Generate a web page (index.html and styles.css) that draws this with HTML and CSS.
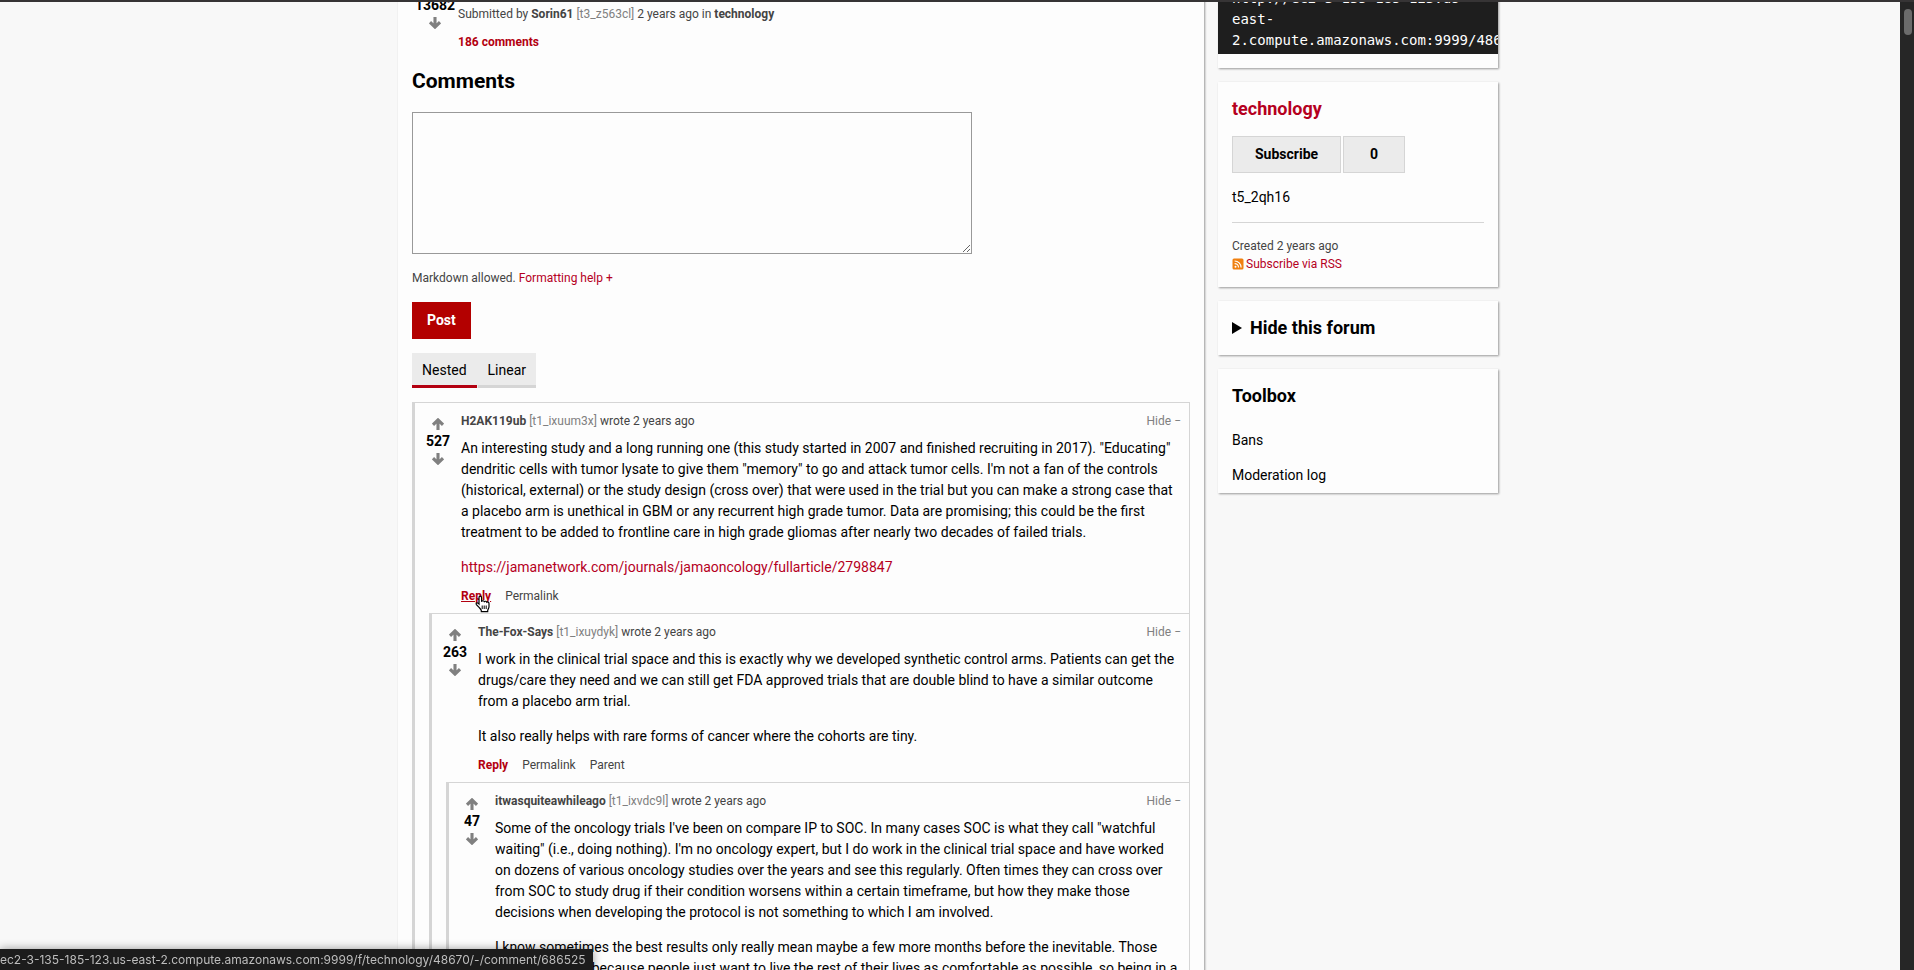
FILE: index.html
```html
<!DOCTYPE html>
<html lang="en">
<head>
<meta charset="utf-8">
<title>technology</title>
<link rel="stylesheet" href="styles.css">
</head>
<body>
<svg class="defs" aria-hidden="true">
  <symbol id="arrow-up" viewBox="0 0 12 12"><path d="M6 2V12M1 6.800 6 1.900l5 4.900" fill="none" stroke="currentColor" stroke-width="3.100"/></symbol>
  <symbol id="arrow-down" viewBox="0 0 12 12"><path d="M6 0v10M1 5.200 6 10.100l5-4.900" fill="none" stroke="currentColor" stroke-width="3.100"/></symbol>
</svg>
<div class="window">
  <div class="viewport">
    <div class="page">
      <main class="main">
        <article class="submission">
          <div class="vote">
            <span class="vote-score">13682</span>
            <button class="vote-button" aria-label="Downvote"><svg><use href="#arrow-down"/></svg></button>
          </div>
          <div class="submission-info">
            <p class="meta">Submitted by <a class="strong" href="#">Sorin61</a> <span class="muted">[t3_z563cl]</span> 2 years ago in <a class="strong" href="#">technology</a></p>
            <p class="meta"><a class="accent strong" href="#">186 comments</a></p>
          </div>
        </article>

        <h2 class="heading">Comments</h2>
        <form class="comment-form">
          <textarea class="textbox" aria-label="Comment"></textarea>
          <p class="meta">Markdown allowed. <a class="accent" href="#">Formatting help +</a></p>
          <button class="button-primary" type="button">Post</button>
        </form>

        <nav class="tabs">
          <a class="tab tab-active" href="#">Nested</a>
          <a class="tab" href="#">Linear</a>
        </nav>

        <article class="comment">
          <div class="comment-row">
            <div class="vote">
              <button class="vote-button" aria-label="Upvote"><svg><use href="#arrow-up"/></svg></button>
              <span class="vote-score">527</span>
              <button class="vote-button" aria-label="Downvote"><svg><use href="#arrow-down"/></svg></button>
            </div>
            <div class="comment-main">
              <header class="comment-header meta">
                <span><a class="strong" href="#">H2AK119ub</a> <span class="muted">[t1_ixuum3x]</span> wrote 2 years ago</span>
                <button class="hide">Hide −</button>
              </header>
              <div class="comment-body">
                <p>An interesting study and a long running one (this study started in 2007 and finished recruiting in 2017). "Educating" dendritic cells with tumor lysate to give them "memory" to go and attack tumor cells. I'm not a fan of the controls (historical, external) or the study design (cross over) that were used in the trial but you can make a strong case that a placebo arm is unethical in GBM or any recurrent high grade tumor. Data are promising; this could be the first treatment to be added to frontline care in high grade gliomas after nearly two decades of failed trials.</p>
                <p><a class="accent" href="#">https://jamanetwork.com/journals/jamaoncology/fullarticle/2798847</a></p>
              </div>
              <footer class="comment-footer meta">
                <a class="accent strong hovered" href="#">Reply<svg class="pointer" viewBox="0 0 16 18"><path d="M5 1.200c1 0 1.600.7 1.600 1.600v4l.2-.6c.3-.7 2.200-.6 2.500.4.500-.6 2.200-.5 2.500.6.600-.5 2.200-.2 2.200 1.400v3.200c0 1.600-1.300 2.400-1.300 3.800v1H6.300v-1c0-1-1.200-1.800-2-3L1.400 9.600c-.8-1.300.5-2.300 1.700-1.400l.9.900V2.800c0-.9.300-1.600 1-1.600z" fill="#fff" stroke="#000" stroke-width="1.200"/><path d="M7.200 10.500v3.500M9.200 10.500v3.500M11.200 10.500v3.500" stroke="#000" fill="none"/></svg></a>
                <a href="#">Permalink</a>
              </footer>
            </div>
          </div>

          <article class="comment comment-nested">
            <div class="comment-row">
              <div class="vote">
                <button class="vote-button" aria-label="Upvote"><svg><use href="#arrow-up"/></svg></button>
                <span class="vote-score">263</span>
                <button class="vote-button" aria-label="Downvote"><svg><use href="#arrow-down"/></svg></button>
              </div>
              <div class="comment-main">
                <header class="comment-header meta">
                  <span><a class="strong" href="#">The-Fox-Says</a> <span class="muted">[t1_ixuydyk]</span> wrote 2 years ago</span>
                  <button class="hide">Hide −</button>
                </header>
                <div class="comment-body">
                  <p>I work in the clinical trial space and this is exactly why we developed synthetic control arms. Patients can get the drugs/care they need and we can still get FDA approved trials that are double blind to have a similar outcome from a placebo arm trial.</p>
                  <p>It also really helps with rare forms of cancer where the cohorts are tiny.</p>
                </div>
                <footer class="comment-footer meta">
                  <a class="accent strong" href="#">Reply</a>
                  <a href="#">Permalink</a>
                  <a href="#">Parent</a>
                </footer>
              </div>
            </div>

            <article class="comment comment-nested">
              <div class="comment-row">
                <div class="vote">
                  <button class="vote-button" aria-label="Upvote"><svg><use href="#arrow-up"/></svg></button>
                  <span class="vote-score">47</span>
                  <button class="vote-button" aria-label="Downvote"><svg><use href="#arrow-down"/></svg></button>
                </div>
                <div class="comment-main">
                  <header class="comment-header meta">
                    <span><a class="strong" href="#">itwasquiteawhileago</a> <span class="muted">[t1_ixvdc9l]</span> wrote 2 years ago</span>
                    <button class="hide">Hide −</button>
                  </header>
                  <div class="comment-body">
                    <p>Some of the oncology trials I've been on compare IP to SOC. In many cases SOC is what they call "watchful waiting" (i.e., doing nothing). I'm no oncology expert, but I do work in the clinical trial space and have worked on dozens of various oncology studies over the years and see this regularly. Often times they can cross over from SOC to study drug if their condition worsens within a certain timeframe, but how they make those decisions when developing the protocol is not something to which I am involved.</p>
                    <p>I know sometimes the best results only really mean maybe a few more months before the inevitable. Those trials are tough because people just want to live the rest of their lives as comfortable as possible, so being in a</p>
                  </div>
                </div>
              </div>
            </article>
          </article>
        </article>
      </main>

      <aside class="sidebar">
        <section class="card">
          <pre class="code">http://ec2-3-135-185-123.us-
east-
2.compute.amazonaws.com:9999/48670</pre>
        </section>

        <section class="card">
          <h3 class="card-title"><a class="accent" href="#">technology</a></h3>
          <div class="subscribe">
            <button class="button">Subscribe</button>
            <button class="button button-count">0</button>
          </div>
          <p class="description">t5_2qh16</p>
          <div class="card-meta">
            <p>Created 2 years ago</p>
            <p><a class="accent rss" href="#"><svg class="rss-icon" viewBox="0 0 12 12"><rect x=".5" y=".5" width="11" height="11" rx="1.500" fill="#f08010"/><circle cx="3.500" cy="8.700" r="1" fill="#fff"/><path d="M2.600 5.600a3.900 3.900 0 0 1 3.900 3.900M2.600 3a6.500 6.500 0 0 1 6.500 6.500" fill="none" stroke="#fff" stroke-width="1.200"/></svg>Subscribe via RSS</a></p>
          </div>
        </section>

        <section class="card">
          <details>
            <summary class="card-title summary"><svg class="marker" viewBox="0 0 10 12"><path d="M0 0l10 6-10 6z"/></svg>Hide this forum</summary>
          </details>
        </section>

        <section class="card card-list">
          <h3 class="card-title">Toolbox</h3>
          <ul class="links">
            <li><a href="#">Bans</a></li>
            <li><a href="#">Moderation log</a></li>
          </ul>
        </section>
      </aside>
    </div>
  </div>
  <div class="scrollbar"><div class="scrollbar-thumb"></div></div>
</div>
<div class="status">ec2-3-135-185-123.us-east-2.compute.amazonaws.com:9999/f/technology/48670/-/comment/686525</div>
</body>
</html>
```
FILE: styles.css
```css
* {
  box-sizing: border-box;
}

body {
  margin: 0;
  background: #f8f8f8;
  color: #000;
  font: 14px/21px Roboto, sans-serif;
}

h2, h3, p, ul, pre {
  margin: 0;
  padding: 0;
}

a {
  color: inherit;
  text-decoration: none;
}

button {
  border: 0;
  padding: 0;
  background: none;
  color: inherit;
  font: inherit;
}

.defs {
  position: absolute;
  width: 0;
  height: 0;
}

.window {
  display: flex;
  height: 100vh;
  border-top: 2px solid #363435;
}

.viewport {
  flex: 1;
  min-width: 0;
  overflow: hidden;
}

.page {
  display: flex;
  max-width: 1104px;
  margin: -49px auto 0;
}

.main {
  flex: 1;
  min-width: 0;
  padding: 14px;
  background: #fdfdfd;
  box-shadow: 1px 1px 2px #999;
}

.accent {
  color: #b5001e;
}

.strong {
  font-weight: 700;
}

.muted {
  color: #808080;
}

.meta {
  color: #444;
  font-size: 12px;
}

.accent.strong {
  color: #b30010;
}

.vote {
  display: flex;
  flex: none;
  flex-direction: column;
  align-items: center;
  width: 46px;
}

.vote-button {
  display: flex;
  align-items: center;
  height: 14px;
  color: #808080;
}

.vote-button svg {
  width: 12px;
  height: 12px;
}

.vote-score {
  font-weight: 700;
}

.submission {
  display: flex;
  padding-top: 28px;
}

.submission-info {
  display: flex;
  flex-direction: column;
  gap: 7px;
  padding-top: 9px;
}

.heading {
  margin: 13px 0 16px;
  font-size: 21px;
  line-height: 30px;
}

.comment-form {
  display: flex;
  flex-direction: column;
  align-items: flex-start;
  gap: 14px;
}

.comment-form .meta {
  line-height: 20px;
}

.textbox {
  width: 560px;
  max-width: 100%;
  height: 142px;
  border: 1px solid #999;
  background: #fdfdfd;
}

.button-primary {
  height: 37px;
  padding: 0 15px;
  background: #b30000;
  color: #fff;
  font-weight: 700;
}

.tabs {
  display: inline-flex;
  gap: 1px;
  margin: 14px 0;
  background: #ebebeb;
}

.tab {
  padding: 7px 10px 4px;
  border-bottom: 3px solid #d5d5d5;
}

.tab-active {
  border-color: #b30010;
}

.comment {
  border: 1px solid #d5d5d5;
  border-left-width: 3px;
}

.comment-nested {
  margin-left: 14px;
  border-right: 0;
  border-bottom: 0;
}

.comment-row {
  display: flex;
}

.comment-row .vote {
  padding-top: 14px;
}

.comment-main {
  flex: 1;
  min-width: 0;
  padding: 8px 8px 6px 0;
}

.comment-header {
  display: flex;
  justify-content: space-between;
  margin-bottom: 6px;
}

.hide {
  color: #808080;
}

.comment-body {
  display: flex;
  flex-direction: column;
  gap: 14px;
}

.comment-footer {
  display: flex;
  gap: 14px;
  margin-top: 8px;
}

.hovered {
  position: relative;
  text-decoration: underline;
}

.pointer {
  position: absolute;
  top: 9px;
  left: 14px;
  width: 16px;
  height: 18px;
}

.sidebar {
  display: flex;
  flex: none;
  flex-direction: column;
  gap: 14px;
  width: 280px;
  margin: 0 4px 0 14px;
}

.card {
  padding: 14px;
  background: #fdfdfd;
  box-shadow: 1px 1px 2px #999;
}

.code {
  margin: 0 -14px;
  padding: 21px 14px 3px;
  overflow: hidden;
  background: #1e1e1e;
  color: #fff;
  font: 14px/21px "DejaVu Sans Mono", monospace;
}

.card-title {
  margin-bottom: 14px;
  font-size: 18px;
  font-weight: 700;
  line-height: 26px;
}

.subscribe {
  display: flex;
  gap: 2px;
}

.button {
  height: 37px;
  padding: 0 22px;
  border: 1px solid #d5d5d5;
  background: #ebebeb;
  font-weight: 700;
}

.button-count {
  padding: 0 26px;
}

.description {
  margin: 14px 0;
}

.card-meta {
  padding-top: 14px;
  border-top: 1px solid #d5d5d5;
  color: #444;
  font-size: 12px;
  line-height: 18px;
}

.rss {
  display: flex;
  align-items: center;
  gap: 2px;
}

.rss-icon {
  width: 12px;
  height: 12px;
}

.summary {
  display: flex;
  align-items: center;
  gap: 8px;
  margin: 0;
  list-style: none;
}

.marker {
  width: 10px;
  height: 12px;
}

.card-list {
  padding-bottom: 0;
}

.links {
  list-style: none;
}

.links li {
  padding: 7px 0;
}

.scrollbar {
  flex: none;
  width: 14px;
  padding: 7px 2px 0 4px;
  background: #262626;
}

.scrollbar-thumb {
  height: 26px;
  border-radius: 4px;
  background: #6b6b6b;
}

.status {
  position: fixed;
  bottom: 0;
  left: 0;
  padding: 0 7px 0 0;
  background: #1c1c1c;
  box-shadow: 0 0 10px #0006;
  color: #bdbdbd;
  font: 12px/21px Inter, sans-serif;
}
```
